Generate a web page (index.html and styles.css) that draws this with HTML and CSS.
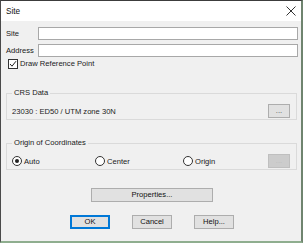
FILE: index.html
```html
<!DOCTYPE html>
<html lang="en">
<head>
  <meta charset="UTF-8" />
  <title>Site</title>
  <link rel="stylesheet" href="styles.css">
</head>
<body>
  <div class="window">
    <div class="titlebar">
      <span class="title">Site</span>
      <svg class="close" width="10" height="10" viewBox="0 0 10 10">
        <path d="M0.5 0.5 L9.5 9.5 M9.5 0.5 L0.5 9.5" stroke="#333" stroke-width="1" fill="none" />
      </svg>
    </div>

    <div class="dialog">
      <div class="field-row">
        <label class="field-label">Site</label>
        <input type="text" class="field-input" />
      </div>
      <div class="field-row">
        <label class="field-label">Address</label>
        <input type="text" class="field-input" />
      </div>
      <div class="check-row">
        <span class="check-box">
          <svg width="8" height="8" viewBox="0 0 8 8">
            <path d="M1 4 L3 6.2 L7 1.2" stroke="#222" stroke-width="1" fill="none" />
          </svg>
        </span>
        <span>Draw Reference Point</span>
      </div>

      <fieldset class="group crs">
        <legend>CRS Data</legend>
        <div class="group-row">
          <span class="crs-text">23030 : ED50 / UTM zone 30N</span>
          <button class="btn small">...</button>
        </div>
      </fieldset>

      <fieldset class="group origin">
        <legend>Origin of Coordinates</legend>
        <div class="radio-row">
          <span class="radio-item"><span class="radio checked"></span>Auto</span>
          <span class="radio-item"><span class="radio"></span>Center</span>
          <span class="radio-item"><span class="radio"></span>Origin</span>
          <button class="btn small disabled">...</button>
        </div>
      </fieldset>

      <div class="center-row">
        <button class="btn wide">Properties...</button>
      </div>

      <div class="footer">
        <button class="btn default">OK</button>
        <button class="btn">Cancel</button>
        <button class="btn">Help...</button>
      </div>
    </div>
  </div>
</body>
</html>
```

FILE: styles.css
```css
* {
  box-sizing: border-box;
}
body {
  margin: 0;
  padding: 0;
  font-family: 'Liberation Sans', Arial, sans-serif;
  font-size: 7.6px;
  color: #1a1a1a;
  background-color: #f0f0f0;
}
.window {
  width: 303px;
  height: 243px;
  border-top: 1px solid #3c3c3c;
  border-left: 1px solid #4a4a4a;
  border-right: 2px solid #6f846f;
  border-bottom: 2px solid #8fae8f;
  background-color: #f0f0f0;
  display: flex;
  flex-direction: column;
}
.titlebar {
  height: 20px;
  background-color: #fff;
  display: flex;
  align-items: center;
  justify-content: space-between;
  padding: 0 5px 0 5px;
}
.title {
  font-size: 8.2px;
  color: #111;
}
.close {
  display: block;
}
.dialog {
  padding: 6px 3px 0 5px;
  display: flex;
  flex-direction: column;
}
.field-row {
  display: flex;
  align-items: center;
  height: 13px;
  margin-bottom: 4px;
}
.field-label {
  width: 32px;
}
.field-input {
  flex: 1;
  height: 13px;
  border: 1px solid #a8a8a8;
  background-color: #fff;
  padding: 0 2px;
  font: inherit;
  outline: none;
}
.check-row {
  display: flex;
  align-items: center;
  gap: 2px;
  height: 11px;
  margin-top: -3px;
  padding-left: 2px;
}
.check-box {
  width: 10px;
  height: 10px;
  border: 1px solid #333;
  background-color: #fff;
  display: flex;
  align-items: center;
  justify-content: center;
}
.check-box svg {
  display: block;
}
.group {
  margin: 0;
  border: 1px solid #dadada;
  padding: 0 6px 1px 5px;
  min-width: 0;
}
.group legend {
  padding: 0 2px;
  margin-left: 0;
  line-height: 10px;
}
.crs {
  margin-top: 19px;
  margin-right: 1px;
}
.group-row {
  display: flex;
  align-items: center;
  justify-content: space-between;
  margin-top: 6px;
  height: 14px;
}
.crs-text {
  color: #222;
}
.origin {
  margin-top: 18px;
  margin-right: 1px;
  padding-bottom: 2px;
}
.radio-row {
  display: grid;
  grid-template-columns: 83px 88px 1fr auto;
  align-items: center;
  margin-top: 6px;
  height: 13px;
}
.radio-item {
  display: flex;
  align-items: center;
  gap: 2px;
}
.radio {
  width: 10px;
  height: 10px;
  border-radius: 50%;
  border: 1px solid #333;
  background-color: #fff;
  display: flex;
  align-items: center;
  justify-content: center;
}
.radio.checked::after {
  content: '';
  width: 4px;
  height: 4px;
  border-radius: 50%;
  background-color: #222;
}
.btn {
  font: inherit;
  color: #111;
  background-color: #e1e1e1;
  border: 1px solid #adadad;
  width: 40px;
  height: 14px;
  padding: 0;
  line-height: 12px;
}
.btn.small {
  width: 22px;
  color: #555;
  line-height: 8px;
}
.btn.disabled {
  background-color: #cccccc;
  border-color: #bfbfbf;
  color: #bcbcbc;
}
.btn.default {
  border: 2px solid #0078d7;
  line-height: 10px;
}
.btn.wide {
  width: 122px;
}
.center-row {
  display: flex;
  justify-content: center;
  margin-top: 18px;
}
.footer {
  display: flex;
  justify-content: center;
  gap: 22px;
  margin-top: 13px;
}
```
